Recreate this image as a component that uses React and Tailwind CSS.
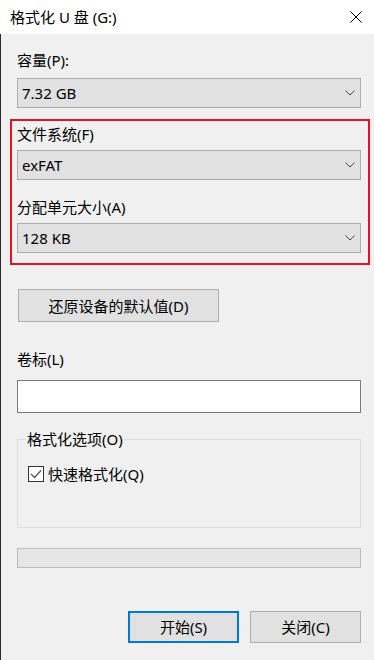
import React from 'react';

const font = { fontFamily: '"Noto Sans", "Noto Sans CJK SC", sans-serif' };

const Chevron = () => (
  <svg width="10" height="6" viewBox="0 0 10 6" fill="none">
    <polyline points="0.5,0.5 5,5 9.5,0.5" stroke="#444" strokeWidth="1" />
  </svg>
);

const Combo = ({ value }) => (
  <div className="h-[30px] flex items-center justify-between bg-[#e1e1e1] border border-[#adadad] pl-[4px] pr-[5px] text-[15px] leading-[20px]">
    <span>{value}</span>
    <Chevron />
  </div>
);

const Label = ({ children, className = '' }) => (
  <div className={`h-[20px] text-[15px] leading-[20px] ${className}`}>{children}</div>
);

export default function App() {
  return (
    <div className="w-[374px] h-[660px] bg-[#f0f0f0] text-black flex flex-col overflow-hidden" style={font}>
      {/* title bar */}
      <div className="h-[34px] bg-white flex items-center justify-between pl-[10px] pr-[12px] shrink-0">
        <span className="text-[15px] leading-[20px]">格式化 U 盘 (G:)</span>
        <svg width="12" height="12" viewBox="0 0 12 12">
          <line x1="0.5" y1="0.5" x2="11.5" y2="11.5" stroke="#000" strokeWidth="1" />
          <line x1="11.5" y1="0.5" x2="0.5" y2="11.5" stroke="#000" strokeWidth="1" />
        </svg>
      </div>

      {/* body */}
      <div className="flex-1 flex flex-col pl-[16px] pr-[13px] border-l border-[#2b2b2b]">
        <Label className="mt-[16px]">容量(P):</Label>
        <div className="mt-[8px]">
          <Combo value="7.32 GB" />
        </div>

        <div className="mt-[11px] -ml-[7px] -mr-[9px] border-2 border-[#e81123] pl-[5px] pr-[7px] pt-[3px] pb-[10px]">
          <Label>文件系统(F)</Label>
          <div className="mt-[6px]">
            <Combo value="exFAT" />
          </div>
          <Label className="mt-[17px]">分配单元大小(A)</Label>
          <div className="mt-[6px]">
            <Combo value="128 KB" />
          </div>
        </div>

        <button className="mt-[24px] ml-[1px] w-[201px] h-[33px] bg-[#e1e1e1] border border-[#adadad] text-[15px] leading-[20px]">
          还原设备的默认值(D)
        </button>

        <Label className="mt-[27px]">卷标(L)</Label>
        <div className="mt-[11px] h-[33px] bg-white border border-[#7a7a7a]" />

        <fieldset className="mt-[16px] h-[99px] border border-[#dcdcdc] pl-[8px] pr-[8px]">
          <legend className="px-[1px] text-[15px] leading-[20px]">格式化选项(O)</legend>
          <div className="mt-[15px] ml-[2px] flex items-center gap-[4px] h-[20px]">
            <div className="w-[16px] h-[16px] border border-[#333] bg-white flex items-center justify-center">
              <svg width="12" height="10" viewBox="0 0 12 10" fill="none">
                <polyline points="1,5 4.5,8.5 11,1.5" stroke="#555" strokeWidth="1.3" />
              </svg>
            </div>
            <span className="text-[15px] leading-[20px]">快速格式化(Q)</span>
          </div>
        </fieldset>

        <div className="mt-[20px] h-[20px] bg-[#e6e6e6] border border-[#bcbcbc]" />

        <div className="mt-[43px] flex justify-end gap-[11px]">
          <button className="w-[111px] h-[32px] bg-[#e1e1e1] border-2 border-[#0078d7] text-[15px] leading-[20px]">
            开始(S)
          </button>
          <button className="w-[111px] h-[32px] bg-[#e1e1e1] border border-[#adadad] text-[15px] leading-[20px]">
            关闭(C)
          </button>
        </div>
      </div>
    </div>
  );
}
